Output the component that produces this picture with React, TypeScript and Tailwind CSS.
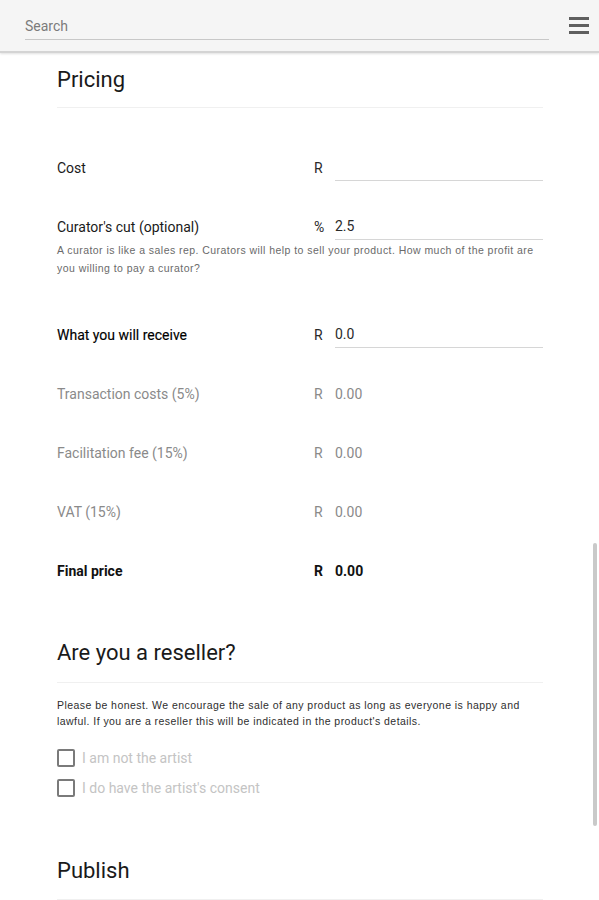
import React from 'react';

// Pricing form, mobile width

const font = "font-['Roboto','Liberation_Sans',sans-serif]";
const small = "font-['Liberation_Sans','Arial',sans-serif] text-[10.5px] tracking-[0.45px]";

function Row({
  label,
  sign,
  value,
  tone = 'normal',
  input = false,
  className = '',
}: {
  label: string;
  sign: string;
  value?: string;
  tone?: 'normal' | 'muted' | 'strong' | 'medium';
  input?: boolean;
  className?: string;
}) {
  const labelCls =
    tone === 'muted'
      ? 'text-[#8a8a8a]'
      : tone === 'strong'
      ? 'text-[#111] font-bold'
      : tone === 'medium'
      ? 'text-black [-webkit-text-stroke:0.15px_#000]'
      : 'text-[#1a1a1a]';
  const valueCls =
    tone === 'muted' ? 'text-[#8a8a8a]' : tone === 'strong' ? 'text-[#111] font-bold' : 'text-[#2a2a2a]';
  return (
    <div className={`flex h-[26px] items-center text-[14px] ${className}`}>
      <div className={`w-[257px] ${labelCls}`}>{label}</div>
      <div className={`w-[21px] ${valueCls}`}>{sign}</div>
      <div
        className={`flex h-full flex-1 items-center ${valueCls} ${
          input ? 'border-b border-[#d6d6d6]' : ''
        }`}
      >
        {value}
      </div>
    </div>
  );
}

function Check({ label }: { label: string }) {
  return (
    <div className="flex h-[30px] items-center gap-[7px]">
      <span className="h-[18px] w-[18px] rounded-[2px] border-2 border-[#7a7a7a]" />
      <span className="text-[14px] text-[#c4c4c4]">{label}</span>
    </div>
  );
}

export default function App() {
  return (
    <div className={`relative h-[900px] w-[599px] overflow-hidden bg-white ${font}`}>
      {/* top bar */}
      <div className="flex h-[53px] items-center border-b-2 border-[#d4d4d4] bg-[#f5f5f5] pl-[25px] pr-[10px] shadow-[0_1px_2px_rgba(0,0,0,0.12)]">
        <div className="flex h-[28px] w-[524px] items-center border-b border-[#c8c8c8] pt-[3px] text-[14px] text-[#7b7b7b]">
          Search
        </div>
        <div className="ml-auto flex w-[20px] flex-col gap-[4px]">
          <span className="h-[3px] w-[20px] bg-[#5f5f5f]" />
          <span className="h-[3px] w-[20px] bg-[#5f5f5f]" />
          <span className="h-[3px] w-[20px] bg-[#5f5f5f]" />
        </div>
      </div>

      <div className="pl-[57px] pr-[56px]">
        <h2 className="mt-[13px] border-b border-[#f0f0f0] pb-[13px] text-[22px] leading-[28px] text-[#1a1a1a]">
          Pricing
        </h2>

        <Row label="Cost" sign="R" input className="mt-[47px]" />
        <Row label="Curator's cut (optional)" sign="%" value="2.5" input className="mt-[33px]" />
        <p className={`mt-[1px] leading-[18px] text-[#6a6a6a] ${small}`}>
          A curator is like a sales rep. Curators will help to sell your product. How much of the profit are
          you willing to pay a curator?
        </p>

        <Row label="What you will receive" sign="R" value="0.0" input tone="medium" className="mt-[45px]" />
        <Row label="Transaction costs (5%)" sign="R" value="0.00" tone="muted" className="mt-[33px]" />
        <Row label="Facilitation fee (15%)" sign="R" value="0.00" tone="muted" className="mt-[33px]" />
        <Row label="VAT (15%)" sign="R" value="0.00" tone="muted" className="mt-[33px]" />
        <Row label="Final price" sign="R" value="0.00" tone="strong" className="mt-[33px]" />

        <h2 className="mt-[55px] border-b border-[#f0f0f0] pb-[15px] text-[22px] leading-[28px] text-[#1a1a1a]">
          Are you a reseller?
        </h2>
        <p className={`mt-[14px] leading-[16px] text-[#2e2e2e] ${small}`}>
          Please be honest. We encourage the sale of any product as long as everyone is happy and lawful. If
          you are a reseller this will be indicated in the product's details.
        </p>
        <div className="mt-[14px]">
          <Check label="I am not the artist" />
          <Check label="I do have the artist's consent" />
        </div>

        <h2 className="mt-[54px] border-b border-[#f0f0f0] pb-[14px] text-[22px] leading-[28px] text-[#1a1a1a]">
          Publish
        </h2>
      </div>

      {/* scroll indicator */}
      <div className="absolute left-[593px] top-[543px] h-[283px] w-[4px] rounded-full bg-[#c9c9c9]" />
    </div>
  );
}
